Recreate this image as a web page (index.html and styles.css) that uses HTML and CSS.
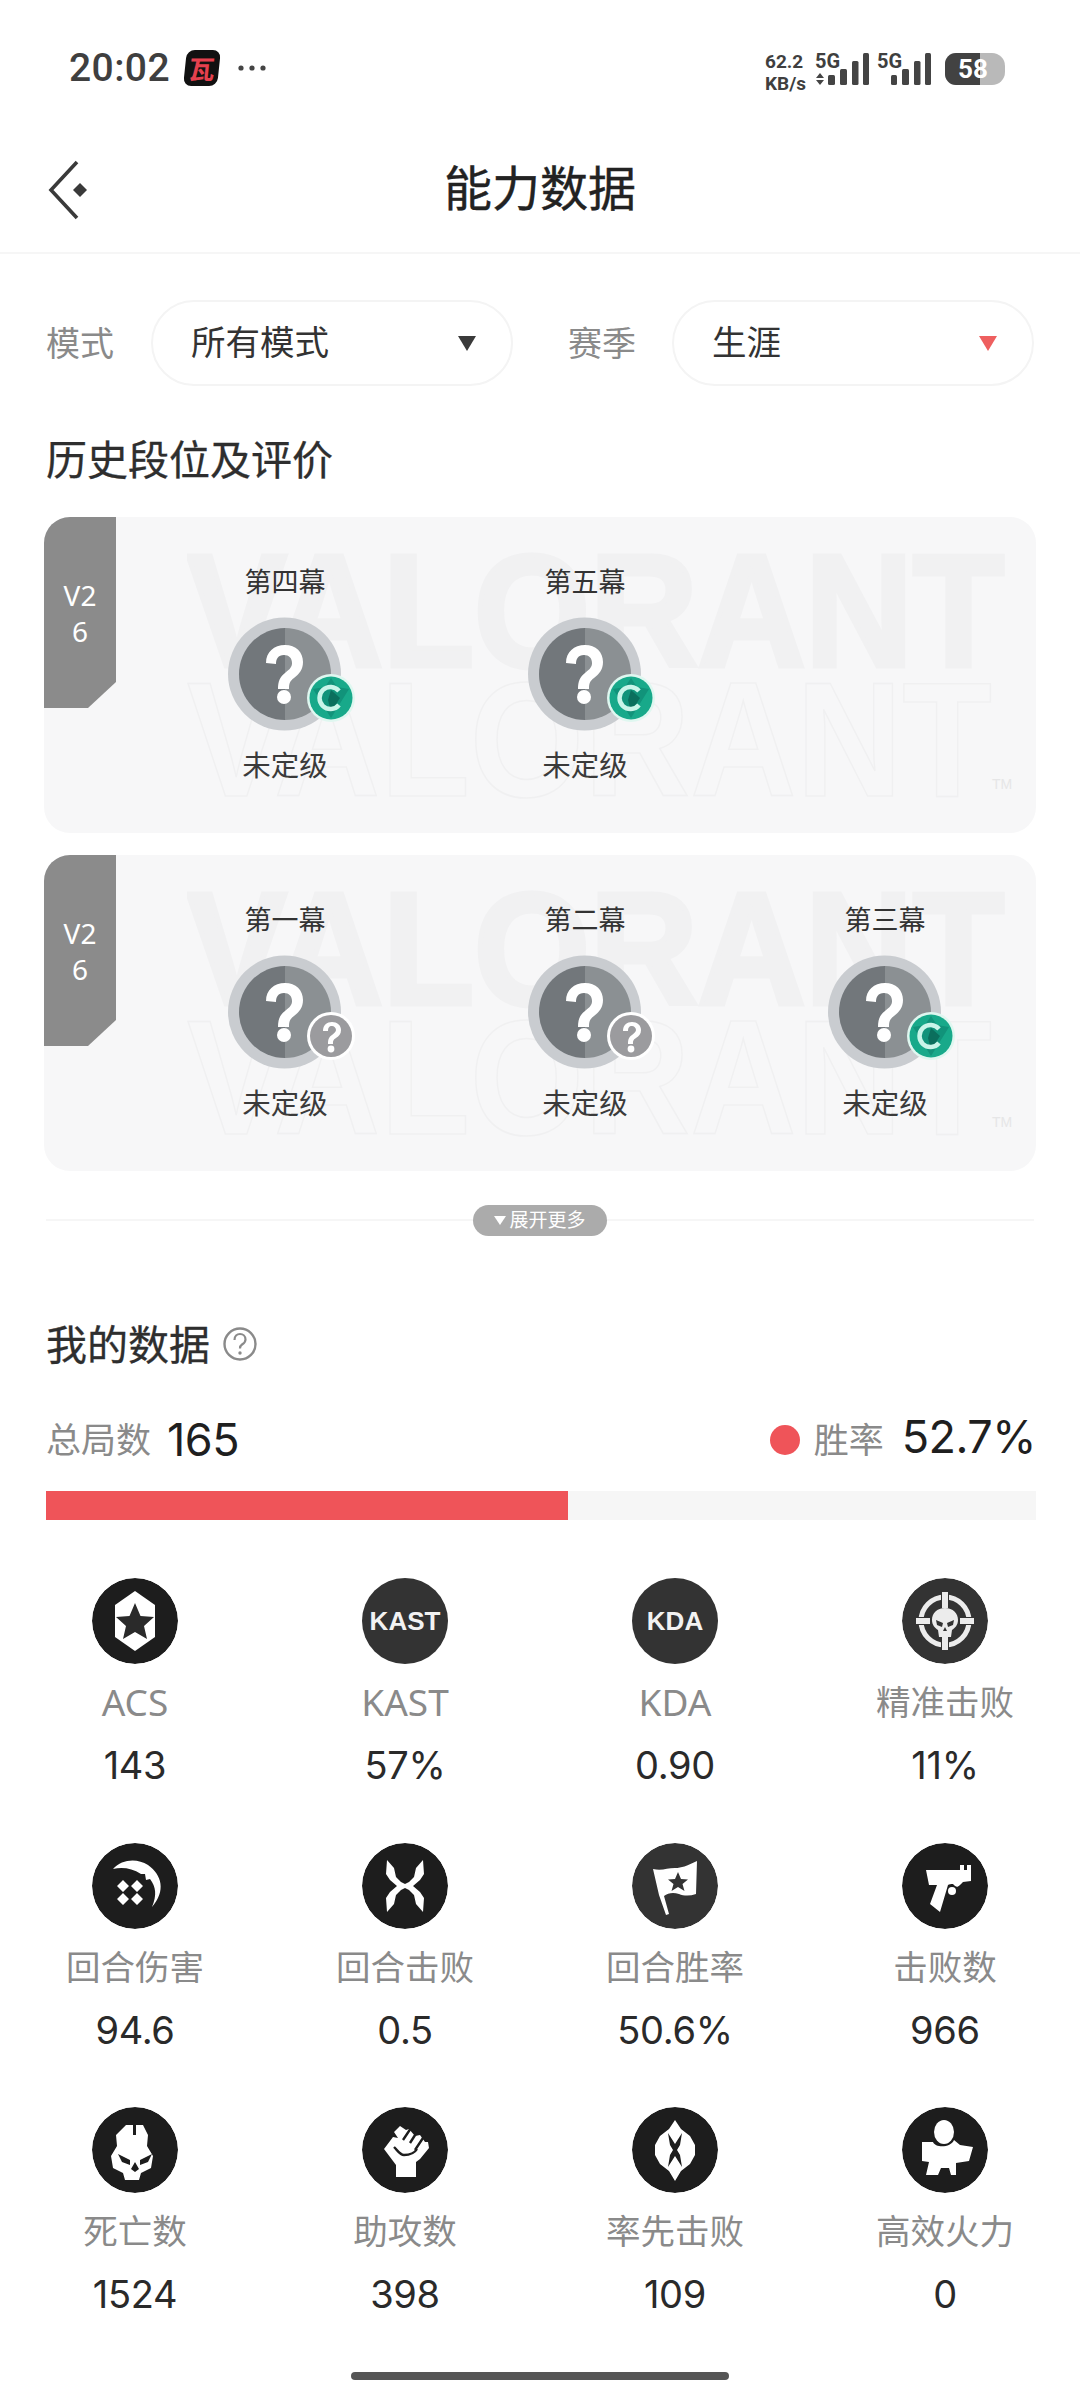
FILE: index.html
```html
<!DOCTYPE html>
<html lang="zh">
<head>
<meta charset="utf-8">
<title>能力数据</title>
<link rel="stylesheet" href="styles.css">
</head>
<body>
<svg class="defs" width="0" height="0">
  <defs>
    <g id="medal">
      <circle cx="56.500" cy="57" r="56.500" fill="#c9ccd0"/>
      <path d="M57 11a46 46 0 0 0 0 92z" fill="#72777b"/>
      <path d="M57 11a46 46 0 0 1 0 92z" fill="#8b9093"/>
      <path d="M38 46c0-11 8-18 19-18s18 7 18 17c0 8-4 12-9 16-4 3-5 5-5 11H50c0-8 2-12 7-16 5-4 7-6 7-10 0-5-3-8-8-8-6 0-8 4-8 9z" fill="#fff"/>
      <circle cx="56" cy="80" r="7" fill="#fff"/>
    </g>
    <g id="badge-c">
      <circle cx="24" cy="24" r="24" fill="#dff7f0"/>
      <circle cx="24" cy="24" r="21.500" fill="#18a98a"/>
      <path d="M24 4l6 9 12 2-18 29L6 15l12-2z" fill="#11937a"/>
      <path d="M24 16l9 8-9 14-3-12z" fill="#0b6f5d"/>
      <path d="M32 17a11 11 0 1 0 0 14" fill="none" stroke="#c9f5e9" stroke-width="4.500"/>
    </g>
    <g id="badge-q">
      <circle cx="24" cy="24" r="24" fill="#fff"/>
      <circle cx="24" cy="24" r="21" fill="#9b9b9e"/>
      <path d="M16 19c0-6 4-9 9-9 5 0 9 3 9 8 0 4-2 6-5 8-3 2-3 3-3 6h-5c0-5 1-7 4-9 2-2 4-3 4-5 0-2-2-4-4-4-3 0-4 2-4 5z" fill="#fff"/>
      <circle cx="24" cy="37" r="3.400" fill="#fff"/>
    </g>
    <g id="wm">
      <text class="wm-solid" x="0" y="129" textLength="817" lengthAdjust="spacingAndGlyphs">VALORANT</text>
      <text class="wm-line" x="0" y="259" textLength="805" lengthAdjust="spacingAndGlyphs">VALORANT</text>
      <text class="wm-tm" x="805" y="252">TM</text>
    </g>
  </defs>
</svg>

<header class="status">
  <div class="status-left">
    <span class="clock">20:02</span>
    <span class="app-icon">瓦</span>
    <svg class="dots" viewBox="0 0 30 6"><circle cx="4" cy="3" r="2.600"/><circle cx="15" cy="3" r="2.600"/><circle cx="26" cy="3" r="2.600"/></svg>
  </div>
  <div class="status-right">
    <div class="net"><span>62.2</span><span>KB/s</span></div>
    <div class="sig">
      <span class="g">5G</span>
      <svg class="bars" viewBox="0 0 54 34"><path d="M1 25l4-5 4 5zM1 27l4 5 4-5z"/><rect x="13" y="22" width="7" height="10" rx="1.500"/><rect x="25" y="16" width="7" height="16" rx="1.500"/><rect x="37" y="8" width="6.500" height="24" rx="1.500"/><rect x="48" y="0" width="6" height="32" rx="1.500"/></svg>
    </div>
    <div class="sig">
      <span class="g">5G</span>
      <svg class="bars" viewBox="0 0 54 34"><rect x="14" y="22" width="6" height="10" rx="1.500"/><rect x="25" y="16" width="7" height="16" rx="1.500"/><rect x="37" y="8" width="6.500" height="24" rx="1.500"/><rect x="48" y="0" width="6" height="32" rx="1.500"/></svg>
    </div>
    <div class="battery"><span class="batt-fill"></span><span class="batt-num">58</span></div>
  </div>
</header>

<nav class="topbar">
  <svg class="back" viewBox="0 0 42 60"><path d="M30 2L4 30l26 28" fill="none" stroke="#3a3a3a" stroke-width="3.600"/><path d="M33 23l7 7-7 7-7-7z" fill="#3a3a3a"/></svg>
  <h1 class="page-title">能力数据</h1>
</nav>

<section class="filters">
  <span class="f-label">模式</span>
  <div class="pill"><span>所有模式</span><i class="tri tri-dark"></i></div>
  <span class="f-label f-label-2">赛季</span>
  <div class="pill"><span>生涯</span><i class="tri tri-red"></i></div>
</section>

<h2 class="sec-title hist-title">历史段位及评价</h2>

<section class="card">
  <svg class="watermark" viewBox="0 0 840 270"><use href="#wm"/></svg>
  <div class="tag"><span>V2</span><span>6</span></div>
  <div class="ranks">
    <div class="rank">
      <span class="rank-name">第四幕</span>
      <div class="medal"><svg class="medal-svg" viewBox="0 0 114 114"><use href="#medal"/></svg><svg class="badge" viewBox="0 0 48 48"><use href="#badge-c"/></svg></div>
      <span class="rank-val">未定级</span>
    </div>
    <div class="rank">
      <span class="rank-name">第五幕</span>
      <div class="medal"><svg class="medal-svg" viewBox="0 0 114 114"><use href="#medal"/></svg><svg class="badge" viewBox="0 0 48 48"><use href="#badge-c"/></svg></div>
      <span class="rank-val">未定级</span>
    </div>
  </div>
</section>

<section class="card card-2">
  <svg class="watermark" viewBox="0 0 840 270"><use href="#wm"/></svg>
  <div class="tag"><span>V2</span><span>6</span></div>
  <div class="ranks">
    <div class="rank">
      <span class="rank-name">第一幕</span>
      <div class="medal"><svg class="medal-svg" viewBox="0 0 114 114"><use href="#medal"/></svg><svg class="badge" viewBox="0 0 48 48"><use href="#badge-q"/></svg></div>
      <span class="rank-val">未定级</span>
    </div>
    <div class="rank">
      <span class="rank-name">第二幕</span>
      <div class="medal"><svg class="medal-svg" viewBox="0 0 114 114"><use href="#medal"/></svg><svg class="badge" viewBox="0 0 48 48"><use href="#badge-q"/></svg></div>
      <span class="rank-val">未定级</span>
    </div>
    <div class="rank">
      <span class="rank-name">第三幕</span>
      <div class="medal"><svg class="medal-svg" viewBox="0 0 114 114"><use href="#medal"/></svg><svg class="badge" viewBox="0 0 48 48"><use href="#badge-c"/></svg></div>
      <span class="rank-val">未定级</span>
    </div>
  </div>
</section>

<div class="more-row"><span class="more"><i class="more-tri"></i>展开更多</span></div>

<div class="mine-head">
  <h2 class="sec-title">我的数据</h2>
  <svg class="help" viewBox="0 0 36 36"><circle cx="18" cy="18" r="15.500" fill="none" stroke="#8a8a8a" stroke-width="2.400"/><path d="M12.500 14c0-4 2.500-6 5.500-6s5.500 2 5.500 5.500c0 3-2 4-3.500 5-1.500 1-2 2-2 4" fill="none" stroke="#8a8a8a" stroke-width="2.200"/><circle cx="18" cy="27" r="1.700" fill="#8a8a8a"/></svg>
</div>

<div class="totals">
  <div class="tot-left"><span class="tot-label">总局数</span><span class="tot-num tot-count">165</span></div>
  <div class="tot-right"><i class="dot"></i><span class="tot-label">胜率</span><span class="tot-num">52.7%</span></div>
</div>
<div class="bar"><div class="bar-fill" style="width:52.7%"></div></div>

<section class="stats">
  <div class="stat">
    <svg class="ic ic-b" viewBox="0 0 86 86"><circle cx="43" cy="43" r="43"/><path d="M43 13l20 14v32L43 73 23 59V27z" fill="#fff"/><path d="M43 25l5.500 13 13.500 1-10 9 3 13-12-7-12 7 3-13-10-9 13.500-1z" fill="#2a2a2a"/></svg>
    <span class="s-label s-latin">ACS</span><span class="s-val">143</span>
  </div>
  <div class="stat">
    <div class="ic ic-g ic-text">KAST</div>
    <span class="s-label s-latin">KAST</span><span class="s-val">57%</span>
  </div>
  <div class="stat">
    <div class="ic ic-g ic-text">KDA</div>
    <span class="s-label s-latin">KDA</span><span class="s-val">0.90</span>
  </div>
  <div class="stat">
    <svg class="ic ic-g" viewBox="0 0 86 86"><circle cx="43" cy="43" r="43"/><circle cx="43" cy="43" r="24" fill="none" stroke="#ececec" stroke-width="5"/><path d="M39 12h8v19h-8zM39 55h8v19h-8zM12 39h19v8H12zM55 39h19v8H55z" fill="#333"/><path d="M40 14h6v16h-6zM40 56h6v16h-6zM14 40h14v6H14zM58 40h14v6H58z" fill="#ececec"/><path d="M43 30c-8 0-13 5-13 12 0 5 3 8 6 10l1 7h12l1-7c3-2 6-5 6-10 0-7-5-12-13-12z" fill="#ececec"/><path d="M34 42l7 3-1 4-5-2zM52 42l-7 3 1 4 5-2zM43 49l-2 4h4z" fill="#333"/></svg>
    <span class="s-label">精准击败</span><span class="s-val">11%</span>
  </div>

  <div class="stat">
    <svg class="ic ic-b" viewBox="0 0 86 86"><circle cx="43" cy="43" r="43"/><path d="M21 26C30 16 45 15 56 22C70 32 74 48 60 64C65 52 64 44 58 36L54 37L53 31L49 31C40 25 30 24 21 26z" fill="#fff"/><path d="M31 37l6 6-6 6-6-6zM45 37l6 6-6 6-6-6zM31 50l6 6-6 6-6-6zM45 50l6 6-6 6-6-6z" fill="#fff"/></svg>
    <span class="s-label">回合伤害</span><span class="s-val">94.6</span>
  </div>
  <div class="stat">
    <svg class="ic ic-b" viewBox="0 0 86 86"><circle cx="43" cy="43" r="43"/><path d="M25 17l7 8 2 9 5 5 4 2 4-2 5-5 2-9 7-8 1 14-4 6-7 6 7 6 4 6-1 14-7-8-2-9-5-5-4-2-4 2-5 5-2 9-7 8-1-14 4-6 7-6-7-6-4-6z" fill="#fff"/></svg>
    <span class="s-label">回合击败</span><span class="s-val">0.5</span>
  </div>
  <div class="stat">
    <svg class="ic ic-g" viewBox="0 0 86 86"><circle cx="43" cy="43" r="43"/><path d="M21 26c9 2 14-1 22-1 7 0 11-2 22-7l-1 33c-6 2-12 2-17 0-6-2-11-1-15 2l5 18-3 1-7-20z" fill="#fff"/><path d="M46 29l3 7 7 .5-5.500 4.500 2 7-6.500-4-6.500 4 2-7-5.500-4.500 7-.5z" fill="#333"/></svg>
    <span class="s-label">回合胜率</span><span class="s-val">50.6%</span>
  </div>
  <div class="stat">
    <svg class="ic ic-b" viewBox="0 0 86 86"><circle cx="43" cy="43" r="43"/><path d="M24 27h34v-5h4v5h3v-5h4v16l-8 1-3 3c-3 3-4 2-7-1-2 0-4 0-5 1l-8 27-10-8 7-19h-8z" fill="#fff"/><circle cx="50" cy="48" r="4" fill="#fff"/></svg>
    <span class="s-label">击败数</span><span class="s-val">966</span>
  </div>

  <div class="stat">
    <svg class="ic ic-b" viewBox="0 0 86 86"><circle cx="43" cy="43" r="43"/><path d="M34 18h7v10h3V18h7l5 10-1 11 6 10-2 12-10 5-2 7H33l-2-7-10-5-2-12 6-10-1-11z" fill="#fff"/><path d="M26 47l12 6v5l-8-3zM60 47l-12 6v5l8-3zM43 55l-4 7 4 3 4-3z" fill="#1d1d1d"/></svg>
    <span class="s-label">死亡数</span><span class="s-val">1524</span>
  </div>
  <div class="stat">
    <svg class="ic ic-b" viewBox="0 0 86 86"><circle cx="43" cy="43" r="43"/><path d="M34 70V58L22 42l9-12 5 1-4-6 6-6 6 4 3-1 6 7 5-1 5 7 3 0 1 6-9 11-4 3V70z" fill="#fff"/><path d="M41 33l8-12M48 36l7-11M53 43l8-12M32 40c4 4 6 8 10 8 5 0 10-1 13-6" fill="none" stroke="#1d1d1d" stroke-width="2.400"/></svg>
    <span class="s-label">助攻数</span><span class="s-val">398</span>
  </div>
  <div class="stat">
    <svg class="ic ic-b" viewBox="0 0 86 86"><circle cx="43" cy="43" r="43"/><path d="M43 13l6 9 9 7 5 9v10l-5 9-9 7-6 10-6-10-9-7-5-9V38l5-9 9-7z" fill="#fff"/><path d="M36 26l7 11 7-11-2 12-3 5 3 5 2 12-7-11-7 11 2-12 3-5-3-5z" fill="#1d1d1d"/></svg>
    <span class="s-label">率先击败</span><span class="s-val">109</span>
  </div>
  <div class="stat">
    <svg class="ic ic-b" viewBox="0 0 86 86"><circle cx="43" cy="43" r="43"/><ellipse cx="42" cy="25" rx="10" ry="12" fill="#fff"/><path d="M20 35h11c2 6 18 6 21-2l6 5 13 2-4 14-13 2v12H49l-2-7h-8l-3 7H24l3-13-7-1z" fill="#fff"/></svg>
    <span class="s-label">高效火力</span><span class="s-val">0</span>
  </div>
</section>

<div class="home"></div>
</body>
</html>
```

FILE: styles.css
```css
* { box-sizing: border-box; margin: 0; padding: 0; }
html, body { width: 1080px; height: 2400px; overflow: hidden; background: #fff; }
body {
  font-family: "Noto Sans", "Noto Sans CJK SC", sans-serif;
  color: #2a2a2a;
  position: relative;
}
.defs { position: absolute; }

/* status bar */
.status {
  height: 130px;
  padding: 46px 75px 0 69px;
  display: flex;
  justify-content: space-between;
  align-items: flex-start;
}
.status-left { display: flex; align-items: center; height: 44px; }
.clock { font: 500 39px/44px Roboto, sans-serif; color: #3f3f3f; letter-spacing: .4px; }
.app-icon {
  width: 34px; height: 36px;
  margin-left: 15px;
  background: #111;
  border-radius: 8px;
  color: #e5404e;
  font: 700 26px/36px "Noto Sans CJK SC", sans-serif;
  text-align: center;
  transform: skewX(-6deg);
}
.dots { width: 30px; height: 6px; margin-left: 18px; fill: #444; }
.status-right { display: flex; align-items: flex-start; margin-top: 5px; color: #3f3f3f; }
.net { display: flex; flex-direction: column; font: 700 19px/22px Roboto, sans-serif; width: 50px; white-space: nowrap; }
.sig { display: grid; width: 54px; height: 36px; }
.sig + .sig { margin-left: 8px; }
.g { grid-area: 1 / 1; font: 700 20px/20px Roboto, sans-serif; }
.bars { grid-area: 1 / 1; width: 54px; height: 34px; margin-top: 2px; fill: #444; }
.battery {
  position: relative;
  width: 60px; height: 32px;
  margin: 2px 0 0 14px;
  background: #b9b9b9;
  border-radius: 11px 13px 13px 11px;
  overflow: hidden;
}
.batt-fill { position: absolute; left: 0; top: 0; bottom: 0; width: 35px; background: #424242; }
.batt-num {
  position: absolute; left: 13px; top: 0;
  font: 700 26px/32px Roboto, sans-serif; color: #fff;
}

/* top bar */
.topbar {
  height: 124px;
  border-bottom: 2px solid #f6f6f6;
  display: flex;
  align-items: center;
  justify-content: center;
  position: relative;
  padding-bottom: 6px;
}
.back { position: absolute; left: 47px; top: 30px; width: 42px; height: 60px; }
.page-title { font-size: 48px; font-weight: 400; line-height: 60px; color: #222; -webkit-text-stroke: .4px #222; }

/* filters */
.filters {
  margin-top: 46px;
  padding: 0 46px;
  height: 86px;
  display: flex;
  align-items: center;
}
.f-label { font-size: 34px; color: #8a8a8a; width: 105px; line-height: 48px; }
.f-label-2 { margin-left: 55px; width: 105px; margin-right: -1px; }
.pill {
  width: 362px;
  height: 86px;
  border: 2px solid #f4f4f4;
  border-radius: 43px;
  padding: 0 35px 0 38px;
  display: flex;
  align-items: center;
  justify-content: space-between;
  font-size: 34.500px;
  line-height: 48px;
  color: #333;
}
.pill span { margin-top: -2px; }
.tri { width: 0; height: 0; border-left: 9px solid transparent; border-right: 9px solid transparent; border-top: 15px solid; }
.tri-dark { border-top-color: #3a3a3a; }
.tri-red { border-top-color: #ee5f5f; }

.sec-title { font-size: 41px; font-weight: 400; line-height: 56px; color: #2e2e2e; -webkit-text-stroke: .3px #2e2e2e; }
.hist-title { margin: 45px 0 0 46px; }

/* cards */
.card {
  position: relative;
  margin: 30px 44px 0;
  height: 316px;
  background: #f7f7f8;
  border-radius: 26px;
  overflow: hidden;
}
.card-2 { margin-top: 22px; }
.watermark { position: absolute; left: 143px; top: 20px; width: 840px; height: 270px; }
.wm-solid { font: 700 159px "Liberation Sans", sans-serif; fill: #f1f1f2; stroke: #f1f1f2; stroke-width: 5px; }
.wm-line { font: 700 163px "Liberation Sans", sans-serif; fill: none; stroke: #f0f0f1; stroke-width: 1.500px; }
.wm-tm { font: 400 14px "Liberation Sans", sans-serif; fill: #e6e6e7; }
.tag {
  position: absolute; left: 0; top: 0;
  width: 72px; height: 191px;
  background: #8b8b8b;
  clip-path: polygon(0 0, 100% 0, 100% 165px, 44px 100%, 0 100%);
  color: #fff;
  font: 400 28px/36px "Noto Sans", sans-serif;
  padding-top: 60px;
  display: flex; flex-direction: column; align-items: center;
}
.ranks { position: relative; display: flex; padding: 45px 0 0 91px; }
.rank { width: 300px; display: flex; flex-direction: column; align-items: center; }
.rank-name { font-size: 27px; line-height: 40px; color: #333; }
.medal { position: relative; width: 114px; height: 114px; margin-top: 15px; }
.medal-svg { display: block; width: 114px; height: 114px; }
.badge { position: absolute; left: 79px; top: 57px; width: 48px; height: 48px; }
.rank-val { font-size: 28.500px; line-height: 42px; color: #3a3a3a; margin-top: 13px; }

/* more */
.more-row {
  margin: 34px 46px 0;
  height: 30px;
  display: flex;
  justify-content: center;
  align-items: center;
  background: linear-gradient(#f6f6f6, #f6f6f6) center / 100% 2px no-repeat;
}
.more {
  width: 134px; height: 31px;
  border-radius: 16px;
  background: #ababab;
  color: #fff;
  font-size: 19px;
  line-height: 31px;
  display: flex; align-items: center; justify-content: center;
}
.more-tri { width: 0; height: 0; border-left: 6px solid transparent; border-right: 6px solid transparent; border-top: 9px solid #fff; margin-right: 3px; }

/* data */
.mine-head { margin: 81px 46px 0; display: flex; align-items: center; height: 56px; }
.help { width: 36px; height: 36px; margin-left: 12px; }
.totals {
  margin: 38px 44px 0 46px;
  height: 60px;
  display: flex;
  justify-content: space-between;
  align-items: center;
}
.tot-left, .tot-right { display: flex; align-items: center; }
.tot-label { font-size: 35px; color: #8a8a8a; line-height: 48px; }
.tot-num { font: 400 45px/60px Inter, sans-serif; color: #1f1f1f; margin-left: 14px; letter-spacing: -.5px; }
.tot-count { margin-left: 16px; }
.dot { width: 30px; height: 30px; border-radius: 50%; background: #ef5459; margin-right: 14px; }
.tot-right .tot-num { margin-left: 18px; margin-top: -6px; }
.bar { margin: 21px 44px 0 46px; height: 29px; background: #f6f6f6; }
.bar-fill { height: 100%; background: #ef5459; }

.stats {
  margin-top: 58px;
  display: grid;
  grid-template-columns: repeat(4, 270px);
  grid-auto-rows: 264.500px;
}
.stat { display: flex; flex-direction: column; align-items: center; }
.ic { width: 86px; height: 86px; border-radius: 50%; display: block; flex: none; }
.ic-b { fill: #1d1d1d; }
.ic-g { fill: #333; }
.ic-text {
  background: #333;
  color: #f2f2f2;
  display: flex; align-items: center; justify-content: center;
  font: 700 26px/86px "Liberation Sans", sans-serif;
}
.s-label { font-size: 34.500px; line-height: 48px; color: #8a8a8a; margin-top: 14px; }
.s-latin { font-size: 37px; }
.s-val { font: 400 38px/52px Inter, sans-serif; color: #2a2a2a; margin-top: 13px; letter-spacing: -.3px; }

.home {
  position: absolute; left: 351px; top: 2372px;
  width: 378px; height: 8px; border-radius: 4px; background: #555;
}
```
